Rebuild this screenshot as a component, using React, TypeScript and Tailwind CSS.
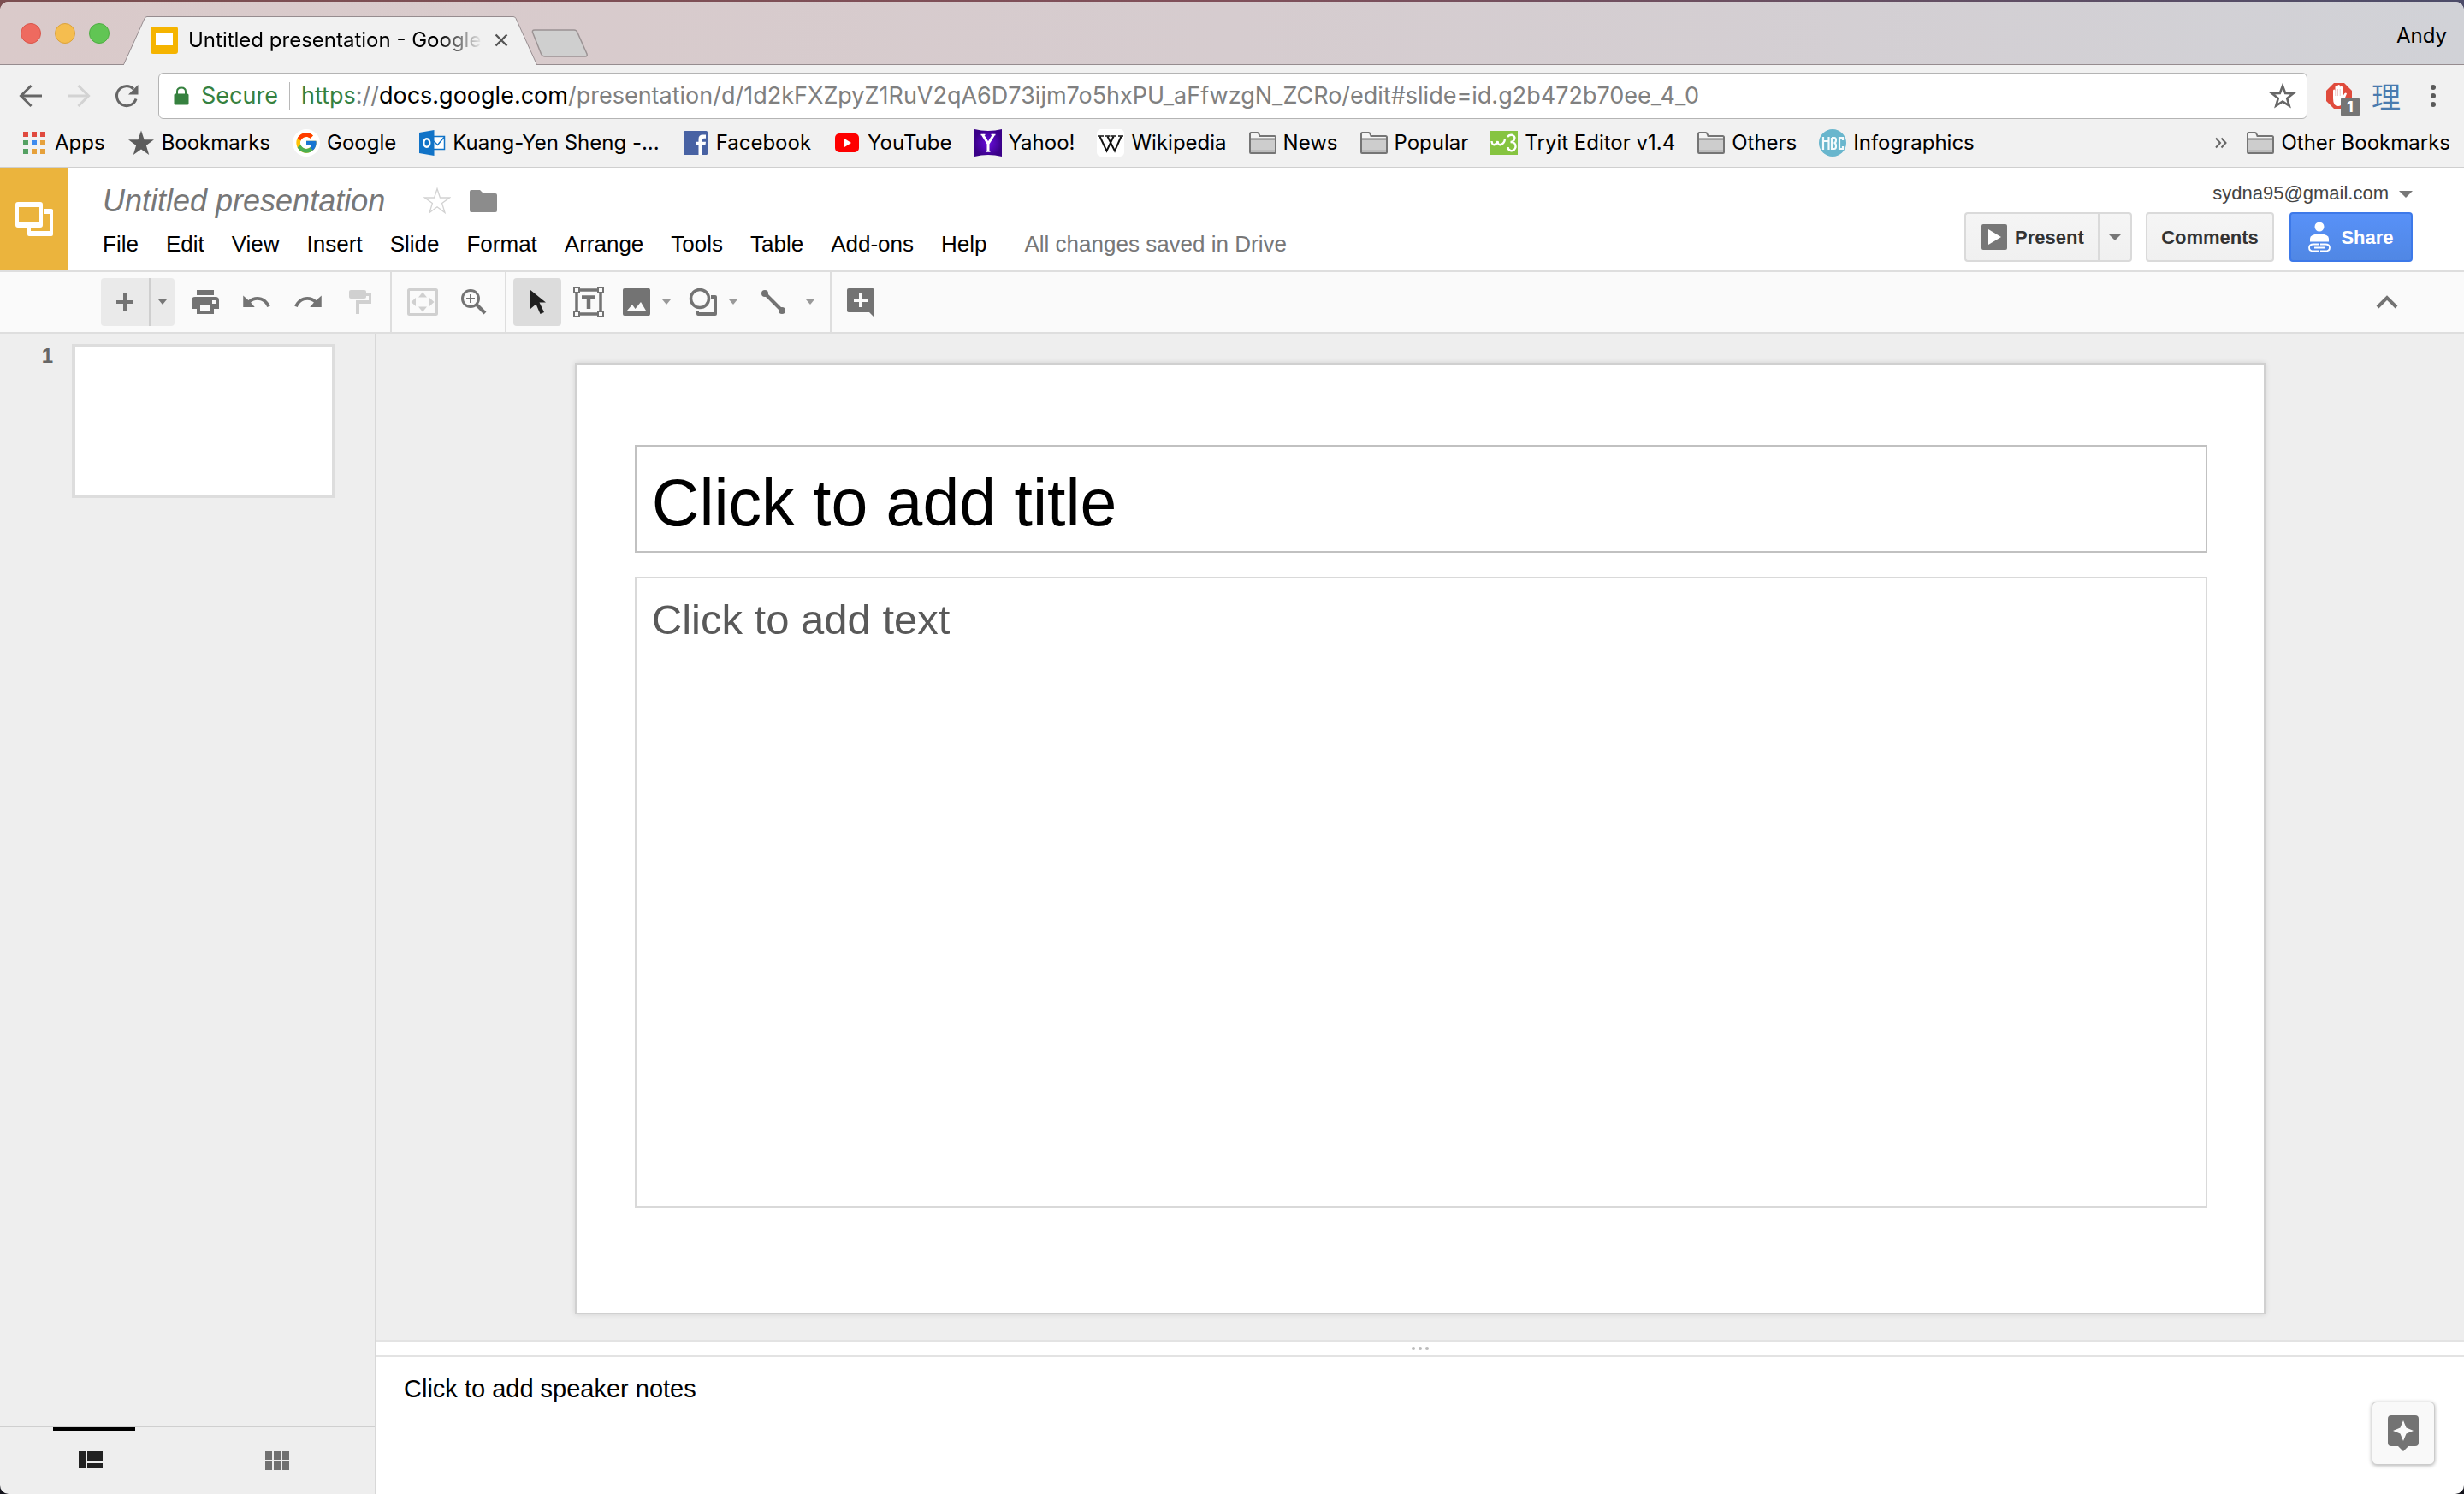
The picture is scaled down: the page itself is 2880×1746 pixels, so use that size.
import type { ReactNode } from "react";
import { FcGoogle } from "react-icons/fc";

const INTER = "font-[Inter,sans-serif]";
const ARIAL = "font-['Liberation_Sans',Arial,sans-serif]";

/* ---------- bookmark icons (32px box) ---------- */

function Ico({ children }: { children: ReactNode }) {
  return (
    <svg viewBox="0 0 32 32" className="size-8 shrink-0" aria-hidden="true">
      {children}
    </svg>
  );
}

const FolderIcon = () => (
  <Ico>
    <path d="M1 27V5.500Q1 4 2.500 4H9.500Q11 4 11.500 5.500L12.500 8H29.500Q31 8 31 9.500V27Q31 28 30 28H2Q1 28 1 27Z" fill="#f4f4f4" stroke="#757575" strokeWidth="2" />
    <path d="M2 12H30V27H2Z" fill="#cdcdcd" />
    <path d="M2 24H30V27H2Z" fill="#bcbcbc" />
    <path d="M1 11.500H31" stroke="#757575" strokeWidth="2" />
  </Ico>
);

const AppsIcon = () => (
  <Ico>
    {["#e04a3f", "#e04a3f", "#e04a3f", "#55a163", "#3f8bee", "#e6a13c", "#55a163", "#e6a13c", "#e6a13c"].map((c, i) => (
      <rect key={i} x={3 + (i % 3) * 10} y={3 + Math.floor(i / 3) * 10} width="6" height="6" fill={c} />
    ))}
  </Ico>
);

const StarIcon = () => (
  <Ico>
    <path d="M16 1.500L19.600 12.200L31 12.300L21.900 19L25.200 30L16 23.400L6.800 30L10.100 19L1 12.300L12.400 12.200Z" fill="#5c5c5c" />
  </Ico>
);

const GoogleIcon = () => (
  <span className="flex size-8 shrink-0 items-center justify-center rounded-full bg-white">
    <FcGoogle className="size-7" />
  </span>
);

const OutlookIcon = () => (
  <Ico>
    <rect x="15" y="8.500" width="15.500" height="15" fill="#fff" stroke="#1173c7" strokeWidth="1.500" />
    <path d="M18 14L22.500 18.500L30 9.500" fill="none" stroke="#1173c7" strokeWidth="1.500" />
    <path d="M1 4L18.500 1V31L1 28Z" fill="#1173c7" />
    <ellipse cx="9.800" cy="16" rx="3.500" ry="4.800" fill="none" stroke="#fff" strokeWidth="2.400" />
  </Ico>
);

const FacebookIcon = () => (
  <Ico>
    <rect x="2" y="2" width="28" height="28" rx="1.500" fill="#4862a3" />
    <path d="M19.500 30V19H16V14.800H19.500V11.500Q19.500 6.500 24.500 6.500H28V10.700H25.800Q24 10.700 24 12.500V14.800H28L27.400 19H24V30Z" fill="#fff" />
  </Ico>
);

const YouTubeIcon = () => (
  <Ico>
    <rect x="2" y="5" width="28" height="22" rx="5" fill="#fe0000" />
    <path d="M13 11L21 16L13 21Z" fill="#fff" />
  </Ico>
);

const YahooIcon = () => (
  <Ico>
    <defs>
      <radialGradient id="yh">
        <stop offset="0" stopColor="#6a0fe0" />
        <stop offset="1" stopColor="#3a0088" />
      </radialGradient>
    </defs>
    <path d="M0 0Q16 4 32 0V32Q16 28 0 32Z" fill="url(#yh)" />
    <path d="M9.500 6.500L16 17V26M22.500 6.500L16 17" fill="none" stroke="#fff" strokeWidth="3" />
    <path d="M7.500 6.500H12.500M19.500 6.500H24.500M13.500 26H18.500" stroke="#fff" strokeWidth="1.500" />
  </Ico>
);

const WikipediaIcon = () => (
  <Ico>
    <rect width="32" height="32" rx="5" fill="#fff" />
    <path d="M3.500 8.500L11.500 25.500L19.500 8.500M12.500 8.500L21 25.500L28.500 8.500" fill="none" stroke="#111" strokeWidth="2" />
    <path d="M1 8H8M10 8H15.500M17 8H22M25 8H31" stroke="#111" strokeWidth="1.300" />
  </Ico>
);

const W3Icon = () => (
  <Ico>
    <rect y="2" width="32" height="28" fill="#86c440" />
    <path d="M1.500 14Q2 19 5 18Q8 17 8.500 14Q9 19 12 18Q16 17 17 12" fill="none" stroke="#fff" strokeWidth="2.400" />
    <path d="M20 9Q22 6 26 7Q30 9 27.500 13Q26 15 23.500 15Q30 15 29.500 21Q28 26 23.500 25Q20.500 24 20.500 21" fill="none" stroke="#fff" strokeWidth="2.400" />
  </Ico>
);

const MbcIcon = () => (
  <Ico>
    <circle cx="16" cy="16" r="16" fill="#69b6cd" />
    <path d="M5 24V9M5 14H11M11.500 9V24M15 10H18Q20 10 20 13Q20 16 17.500 16Q20 16 20 20Q20 23 18 23H15V10M28 13V10H24V23H28V20" fill="none" stroke="#f3fafc" strokeWidth="2.200" />
  </Ico>
);

const BOOKMARKS: { label: string; icon: ReactNode }[] = [
  { label: "Apps", icon: <AppsIcon /> },
  { label: "Bookmarks", icon: <StarIcon /> },
  { label: "Google", icon: <GoogleIcon /> },
  { label: "Kuang-Yen Sheng -...", icon: <OutlookIcon /> },
  { label: "Facebook", icon: <FacebookIcon /> },
  { label: "YouTube", icon: <YouTubeIcon /> },
  { label: "Yahoo!", icon: <YahooIcon /> },
  { label: "Wikipedia", icon: <WikipediaIcon /> },
  { label: "News", icon: <FolderIcon /> },
  { label: "Popular", icon: <FolderIcon /> },
  { label: "Tryit Editor v1.4", icon: <W3Icon /> },
  { label: "Others", icon: <FolderIcon /> },
  { label: "Infographics", icon: <MbcIcon /> },
];

function Bookmark({ label, icon }: { label: string; icon: ReactNode }) {
  return (
    <a href="#" className="flex shrink-0 items-center gap-2 whitespace-nowrap">
      {icon}
      {label}
    </a>
  );
}

/* ---------- browser chrome ---------- */

function TabStrip() {
  return (
    <div className="flex h-[74px] items-end bg-linear-to-r from-[#dacaca] via-[#d6cccf] to-[#d1d2d7] shadow-[inset_0_-1px_0_#968c8f]">
      <div className="flex h-full w-[144px] shrink-0 items-center gap-4 pl-6">
        <button aria-label="Close window" className="size-6 rounded-full border border-[#d9564b] bg-[#ee6a5f]" />
        <button aria-label="Minimize window" className="size-6 rounded-full border border-[#dba23c] bg-[#f5bd4f]" />
        <button aria-label="Zoom window" className="size-6 rounded-full border border-[#4fae43] bg-[#61c554]" />
      </div>
      <div className="relative h-[57px] w-[484px] shrink-0">
        <svg viewBox="0 0 484 57" preserveAspectRatio="none" className="absolute inset-0 size-full" aria-hidden="true">
          <path d="M0 57.500L1 55.500L25 2.500Q26 .5 28 .5H456Q458 .5 459 2.500L483 55.500L484 57.500Z" fill="#f1f1f1" stroke="#968c8f" strokeWidth="1" />
          <path d="M1 57H483" stroke="#f1f1f1" strokeWidth="2" />
        </svg>
        <div className="relative flex h-full items-center pr-[34px] pb-px pl-8">
          <svg viewBox="0 0 32 32" className="size-8 shrink-0" aria-hidden="true">
            <rect width="32" height="32" rx="3" fill="#f5b400" />
            <rect x="6" y="8" width="20" height="14" fill="#fff" />
          </svg>
          <span className="ml-3 w-[344px] overflow-hidden whitespace-nowrap text-2xl text-black mask-r-from-85% mask-r-to-100%">
            Untitled presentation - Google
          </span>
          <button aria-label="Close tab" className="ml-[14px] shrink-0">
            <svg viewBox="0 0 16 16" className="size-4" aria-hidden="true">
              <path d="M1.500 1.500L14.500 14.500M14.500 1.500L1.500 14.500" stroke="#555" strokeWidth="2.400" />
            </svg>
          </button>
        </div>
      </div>
      <button aria-label="New tab" className="-ml-[8px] mb-2 shrink-0">
        <svg viewBox="0 0 68 34" className="h-[34px] w-[68px]" aria-hidden="true">
          <path d="M5 1H51Q54 1 55 4L66 29Q67 32 64 32H17Q14 32 12.500 29L3 5Q1 1 5 1Z" fill="#cfcfcf" stroke="#9b9394" strokeWidth="1.500" />
        </svg>
      </button>
      <button className="mr-5 mb-[18px] ml-auto text-2xl leading-8 text-black">Andy</button>
    </div>
  );
}

function AddressBar() {
  return (
    <div className="flex h-[72px] items-center pr-8 pl-5">
      <div className="flex w-[165px] shrink-0 items-center gap-6">
        <button aria-label="Back">
          <svg viewBox="0 0 32 32" className="size-8" aria-hidden="true">
            <path d="M29 16H5M16.500 4L4.500 16L16.500 28" fill="none" stroke="#666" strokeWidth="3" />
          </svg>
        </button>
        <button aria-label="Forward" disabled>
          <svg viewBox="0 0 32 32" className="size-8" aria-hidden="true">
            <path d="M3 16H27M15.500 4L27.500 16L15.500 28" fill="none" stroke="#d3d3d3" strokeWidth="3" />
          </svg>
        </button>
        <button aria-label="Reload">
          <svg viewBox="0 0 32 32" className="size-8" aria-hidden="true">
            <path d="M27 19.500A11.500 11.500 0 1 1 24 7.800" fill="none" stroke="#666" strokeWidth="3" />
            <path d="M29.500 3V14.500H18Z" fill="#666" />
          </svg>
        </button>
      </div>
      <div className="flex h-[54px] min-w-0 flex-1 items-center rounded-md border border-[#b4b4b4] bg-white pr-3 pl-[17px] text-[27px]">
        <svg viewBox="0 0 18 22" className="h-[22px] w-[18px] shrink-0" aria-hidden="true">
          <path d="M4 10V6Q4 1.500 9 1.500T14 6V10" fill="none" stroke="#36813f" strokeWidth="2" />
          <rect x=".5" y="8.500" width="17" height="13" rx="1.500" fill="#36813f" />
        </svg>
        <span className="ml-[14px] text-[#36813f]">Secure</span>
        <span className="mr-[13px] ml-[13px] h-8 w-px bg-[#b8b8b8]" />
        <div role="textbox" aria-label="Address" tabIndex={0} className="min-w-0 flex-1 overflow-hidden whitespace-nowrap text-[#808080]">
          <span className="text-[#36813f]">https</span>://<span className="text-black">docs.google.com</span>
          /presentation/d/1d2kFXZpyZ1RuV2qA6D73ijm7o5hxPU_aFfwzgN_ZCRo/edit#slide=id.g2b472b70ee_4_0
        </div>
        <button aria-label="Bookmark this page">
          <svg viewBox="0 0 32 32" className="size-8" aria-hidden="true">
            <path d="M16 4.500L19.200 13L28.300 13.300L21.200 18.900L23.700 27.600L16 22.600L8.300 27.600L10.800 18.900L3.700 13.300L12.800 13Z" fill="none" stroke="#666" strokeWidth="2.600" />
          </svg>
        </button>
      </div>
      <button aria-label="Ad blocker, 1 blocked" className="relative ml-[21px] shrink-0">
        <svg viewBox="0 0 32 32" className="size-8" aria-hidden="true">
          <path d="M10 1H22L31 10V22L22 31H10L1 22V10Z" fill="#e04b3c" />
          <path d="M9 19V10Q9 8.500 10.200 8.500T11.500 10V5.500Q11.500 4 13 4T14.300 5.500V4.500Q14.300 3 15.700 3T17 4.500V6Q17 4.500 18.500 4.500T20 6V17L22.500 13Q24 12 25 13.500L20.500 24Q18.500 28 15 28Q9 28 9 19Z" fill="#fff" />
          <path d="M11.700 9V16M14.500 8V16M17.200 8V16" stroke="#e8b5b0" strokeWidth=".7" />
        </svg>
        <span className="absolute -right-2 -bottom-2 flex h-[22px] w-[22px] items-center justify-center rounded-xs bg-[#757575] text-lg leading-none font-bold text-white">1</span>
      </button>
      <button className="ml-[22px] shrink-0 font-['Noto_Sans_CJK_TC',sans-serif] text-[34px] leading-9 text-[#4a7aae]">理</button>
      <button aria-label="Menu" className="ml-[34px] shrink-0">
        <svg viewBox="0 0 8 28" className="h-7 w-2" aria-hidden="true">
          <circle cx="4" cy="4" r="3" fill="#5a5a5a" />
          <circle cx="4" cy="14" r="3" fill="#5a5a5a" />
          <circle cx="4" cy="24" r="3" fill="#5a5a5a" />
        </svg>
      </button>
    </div>
  );
}

function BookmarksBar() {
  return (
    <nav className="flex h-12 items-center border-b border-[#cfcfcf] pr-4 pb-[9px] pl-6 text-2xl text-black">
      <div className="flex min-w-0 flex-1 gap-[26px]">
        {BOOKMARKS.map((b) => (
          <Bookmark key={b.label} {...b} />
        ))}
      </div>
      <button aria-label="More bookmarks" className="mr-[23px]">
        <svg viewBox="0 0 14 14" className="size-[14px]" aria-hidden="true">
          <path d="M1 1.500L6 7L1 12.500M7.500 1.500L12.500 7L7.500 12.500" fill="none" stroke="#666" strokeWidth="2" />
        </svg>
      </button>
      <Bookmark label="Other Bookmarks" icon={<FolderIcon />} />
    </nav>
  );
}

/* ---------- document header ---------- */

const MENUS = ["File", "Edit", "View", "Insert", "Slide", "Format", "Arrange", "Tools", "Table", "Add-ons", "Help"];

const Caret = ({ className }: { className: string }) => (
  <svg viewBox="0 0 16 8" preserveAspectRatio="none" className={className} aria-hidden="true">
    <path d="M0 0H16L8 8Z" fill="currentColor" />
  </svg>
);

const GREY_BUTTON = "h-[58px] border-2 border-[#dadada] bg-linear-to-b from-[#f5f5f5] to-[#f0f0f0] text-[22px] font-bold text-[#333]";

function DocHeader() {
  return (
    <header className="flex h-[122px] border-b-2 border-[#dedede] bg-white">
      <a href="#" aria-label="Slides home" className="flex w-20 shrink-0 items-center justify-center bg-[#ebb43d]">
        <svg viewBox="0 0 44 40" className="h-10 w-11" aria-hidden="true">
          <path d="M3 0H29Q32 0 32 3V27Q32 30 29 30H3Q0 30 0 27V3Q0 0 3 0ZM4 6V24H28V6Z" fill="#fff" fillRule="evenodd" />
          <path d="M33 8H42Q44 8 44 10V38Q44 40 42 40H16Q14 40 14 38V31H18V34H40V14H33Z" fill="#fff" />
        </svg>
      </a>
      <div className="flex min-w-0 flex-1 flex-col pt-[14px] pl-10">
        <div className="flex h-[50px] items-center">
          <input aria-label="Document title" defaultValue="Untitled presentation" className="w-[375px] bg-transparent text-4xl text-[#777] italic" />
          <button aria-label="Star">
            <svg viewBox="0 0 32 32" className="size-8" aria-hidden="true">
              <path d="M16 1.500L19.400 12H30.500L21.600 18.500L25 29.500L16 22.800L7 29.500L10.400 18.500L1.500 12H12.600Z" fill="#fff" stroke="#d2d2d2" strokeWidth="1.300" />
            </svg>
          </button>
          <button aria-label="Move to folder" className="ml-[22px]">
            <svg viewBox="0 0 32 26" className="h-[26px] w-8" aria-hidden="true">
              <path d="M2 0H12L16 4H30Q32 4 32 6V24Q32 26 30 26H2Q0 26 0 24V2Q0 0 2 0Z" fill="#8c8c8c" />
            </svg>
          </button>
        </div>
        <div className="flex h-[50px] items-center gap-8 text-[26px] whitespace-nowrap text-black">
          {MENUS.map((m) => (
            <button key={m}>{m}</button>
          ))}
          <span className="ml-3 text-[#777]">All changes saved in Drive</span>
        </div>
      </div>
      <div className="flex shrink-0 flex-col items-end pt-3 pr-[60px]">
        <button className="flex h-[34px] items-center gap-3 text-[22px] text-[#444]">
          sydna95@gmail.com
          <Caret className="mt-1 h-2 w-4 text-[#777]" />
        </button>
        <div className="mt-[6px] flex">
          <button className={`${GREY_BUTTON} flex w-[156px] items-center gap-[9px] rounded-l border-r-0 pl-[18px]`}>
            <svg viewBox="0 0 30 30" className="size-[30px]" aria-hidden="true">
              <rect width="30" height="30" rx="2" fill="#777" />
              <path d="M8 6L23 15L8 24Z" fill="#fff" />
            </svg>
            Present
          </button>
          <button aria-label="Present options" className={`${GREY_BUTTON} flex w-10 items-center justify-center rounded-r`}>
            <Caret className="h-2 w-4 text-[#777]" />
          </button>
          <button className={`${GREY_BUTTON} ml-4 w-[150px] rounded`}>Comments</button>
          <button className="ml-[18px] flex h-[58px] w-36 items-center justify-center gap-3 rounded border-2 border-[#3d79e9] bg-linear-to-b from-[#5891f8] to-[#5087e4] text-[22px] font-bold text-white">
            <svg viewBox="0 0 26 36" className="h-9 w-[26px]" aria-hidden="true">
              <circle cx="13" cy="6" r="5.500" fill="#fff" />
              <path d="M2 23.500V20Q2 14.500 13 14.500T24 20V23.500Z" fill="#fff" />
              <path d="M12 26.500H6Q1 26.500 1 30.500T6 34.500H12M14 26.500H20Q25 26.500 25 30.500T20 34.500H14M7 30.500H19" fill="none" stroke="#fff" strokeWidth="1.800" />
            </svg>
            Share
          </button>
        </div>
      </div>
    </header>
  );
}

/* ---------- toolbar ---------- */

function Tool({ label, children, className = "w-[60px]", disabled = false }: { label: string; children: ReactNode; className?: string; disabled?: boolean }) {
  return (
    <button aria-label={label} disabled={disabled} className={`flex h-14 shrink-0 items-center justify-center ${className}`}>
      <svg viewBox="0 0 36 36" className="size-9" aria-hidden="true">
        {children}
      </svg>
    </button>
  );
}

const Divider = () => <span className="w-[2px] shrink-0 self-stretch bg-[#dedede]" />;
const SmallCaret = () => <Caret className="ml-1 h-[6px] w-[10px] shrink-0 text-[#999]" />;
const G = "#737373";
const L = "#d0d0d0";

function Toolbar() {
  return (
    <div className="flex h-[72px] items-center border-b-2 border-[#dedede] bg-[#fafafa] pl-[118px]">
      <div className="mr-[6px] flex h-14 overflow-hidden rounded bg-[#eaeaea]">
        <Tool label="New slide" className="w-14">
          <path d="M18 8V28M8 18H28" stroke={G} strokeWidth="4" />
        </Tool>
        <button aria-label="New slide with layout" className="flex w-[30px] items-center justify-center border-l-2 border-[#cfcfcf]">
          <Caret className="h-[6px] w-[10px] text-[#777]" />
        </button>
      </div>
      <Tool label="Print">
        <path d="M8 4H28V10H8ZM6 12H30Q34 12 34 16V26H28V32H8V26H2V16Q2 12 6 12ZM12 22V28H24V22ZM26 16V20H30V16Z" fill={G} fillRule="evenodd" />
      </Tool>
      <Tool label="Undo">
        <path transform="scale(1.5)" d="M12.500 8c-2.650 0-5.050.990-6.900 2.600L1.500 7v9h9l-3.120-3.620c1.390-1.160 3.160-1.880 5.120-1.880 3.540 0 6.550 2.310 7.600 5.500l2.370-.780C21.080 11.030 17.150 8 12.500 8z" fill={G} />
      </Tool>
      <Tool label="Redo">
        <path transform="matrix(-1.5 0 0 1.5 36 0)" d="M12.500 8c-2.650 0-5.050.990-6.900 2.600L1.500 7v9h9l-3.120-3.620c1.390-1.160 3.160-1.880 5.120-1.880 3.540 0 6.550 2.310 7.600 5.500l2.370-.780C21.080 11.030 17.150 8 12.500 8z" fill={G} />
      </Tool>
      <Tool label="Paint format" disabled>
        <path d="M8 4H24Q26 4 26 6V8H32V20H18V32H14V16H29V11H26V12Q26 14 24 14H8Q6 14 6 12V6Q6 4 8 4Z" fill={L} />
      </Tool>
      <span className="w-[6px]" />
      <Divider />
      <span className="w-[6px]" />
      <Tool label="Fit to window" disabled>
        <rect x="1.500" y="3.500" width="33" height="29" rx="1" fill="none" stroke={L} strokeWidth="3" />
        <path d="M18 6.500L23 12.500H13ZM18 29.500L13 23.500H23ZM4.500 18L10 13V23ZM31.500 18L26 23V13Z" fill={L} />
      </Tool>
      <Tool label="Zoom">
        <circle cx="14" cy="14" r="9.500" fill="none" stroke={G} strokeWidth="3" />
        <path d="M14 9V19M9 14H19" stroke={G} strokeWidth="2" />
        <path d="M21 21L31 31" stroke={G} strokeWidth="4" />
      </Tool>
      <span className="w-[6px]" />
      <Divider />
      <Tool label="Select" className="mr-1 ml-2 w-14 rounded bg-[#dcdcdc]">
        <path d="M10 4L28 18.500H20.500L26 30L21.500 32L16.500 20.500L10 26Z" fill="#1f1f1f" />
      </Tool>
      <Tool label="Text box" className="w-14">
        <path d="M4 4H32V32H4Z" fill="none" stroke={G} strokeWidth="3.500" />
        <path d="M1 1H7V7H1ZM29 1H35V7H29ZM1 29H7V35H1ZM29 29H35V35H29Z" fill="#fafafa" stroke={G} strokeWidth="2" />
        <path d="M10 12.500H26M18 12.500V26" stroke={G} strokeWidth="4.500" />
      </Tool>
      <Tool label="Image" className="ml-[2px] w-[52px]">
        <path d="M4 2H32Q34 2 34 4V32Q34 34 32 34H4Q2 34 2 32V4Q2 2 4 2ZM7 28H29L23 18L16.500 26L13 21Z" fill={G} fillRule="evenodd" />
      </Tool>
      <SmallCaret />
      <Tool label="Shape" className="ml-3 w-[52px]">
        <circle cx="14" cy="14" r="10.500" fill="none" stroke={G} strokeWidth="3.500" />
        <path d="M27 10H32Q34 10 34 12V32Q34 34 32 34H12Q10 34 10 32V28H13V30H30V14H27Z" fill={G} />
      </Tool>
      <SmallCaret />
      <Tool label="Line" className="ml-4 w-[52px]">
        <path d="M8 8L28 28" stroke={G} strokeWidth="4" />
        <circle cx="8" cy="8" r="4" fill={G} />
        <circle cx="28" cy="28" r="4" fill={G} />
      </Tool>
      <span className="w-2" />
      <SmallCaret />
      <span className="w-[18px]" />
      <Divider />
      <Tool label="Add comment" className="ml-1 w-[60px]">
        <path d="M4 2H32Q34 2 34 4V36L28 30H4Q2 30 2 28V4Q2 2 4 2ZM16 8V14H10V18H16V24H20V18H26V14H20V8Z" fill={G} fillRule="evenodd" />
      </Tool>
      <button aria-label="Hide menus" className="mr-[77px] ml-auto">
        <svg viewBox="0 0 26 16" className="h-4 w-[26px]" aria-hidden="true">
          <path d="M2 14L13 3L24 14" fill="none" stroke={G} strokeWidth="4" />
        </svg>
      </button>
    </div>
  );
}

/* ---------- workspace ---------- */

function Sidebar() {
  return (
    <aside className="flex w-[440px] shrink-0 flex-col border-r-2 border-[#d8d8d8] bg-[#eee]">
      <div className="flex flex-1 items-start pt-3 pr-[46px]">
        <span className="mr-[22px] w-[62px] text-right text-2xl leading-7 font-bold text-[#666]">1</span>
        <button aria-label="Slide 1" className="h-[180px] flex-1 border-4 border-[#ddd] bg-white" />
      </div>
      <div className="flex h-20 border-t-2 border-[#cfcfcf]">
        <button aria-label="Filmstrip view" className="flex w-[220px] flex-col items-center">
          <span className="h-1 w-24 bg-black" />
          <svg viewBox="0 0 28 20" className="mt-6 mr-2 h-5 w-7" aria-hidden="true">
            <path d="M0 0H8V20H0ZM10 0H28V12H10ZM10 14H28V20H10Z" fill="#222" />
          </svg>
        </button>
        <button aria-label="Grid view" className="flex w-[208px] flex-col items-center">
          <svg viewBox="0 0 28 22" className="mt-7 h-[22px] w-7" aria-hidden="true">
            <path d="M0 0H8V10H0ZM10 0H18V10H10ZM20 0H28V10H20ZM0 12H8V22H0ZM10 12H18V22H10ZM20 12H28V22H20Z" fill="#707070" />
          </svg>
        </button>
      </div>
    </aside>
  );
}

function Workspace() {
  return (
    <main className="flex min-w-0 flex-1 flex-col">
      <section className="flex flex-1 justify-center bg-[#eee] pt-[34px] pb-[30px]">
        <div className="flex w-[81%] flex-col gap-7 border-2 border-[#d0d0d0] bg-white pt-[94px] pr-[66px] pb-[122px] pl-[68px] shadow-[0_0_6px_rgba(0,0,0,0.12)]">
          <input
            aria-label="Slide title"
            placeholder="Click to add title"
            className="h-[126px] w-full border-2 border-[#c1c1c1] px-[18px] pt-2 text-[77px] text-black placeholder:text-black"
          />
          <textarea
            aria-label="Slide body"
            placeholder="Click to add text"
            className="w-full flex-1 resize-none border-2 border-[#d9d9d9] px-[18px] py-5 text-[49px] leading-[56px] text-[#595959] placeholder:text-[#595959]"
          />
        </div>
      </section>
      <div className="flex h-5 items-center justify-center gap-1 border-y-2 border-[#e3e3e3] bg-white">
        <span className="size-1 rounded-full bg-[#bbb]" />
        <span className="size-1 rounded-full bg-[#bbb]" />
        <span className="size-1 rounded-full bg-[#bbb]" />
      </div>
      <section className="flex h-[160px] items-end bg-white pr-[34px] pb-[34px]">
        <textarea
          aria-label="Speaker notes"
          placeholder="Click to add speaker notes"
          className="h-full flex-1 resize-none self-start pt-5 pl-8 text-[29px] leading-[34px] text-black placeholder:text-black"
        />
        <button aria-label="Explore" className="flex size-[74px] items-center justify-center rounded-md border border-[#ccc] bg-[#f9f9f9] shadow-[0_1px_4px_rgba(0,0,0,0.3)]">
          <svg viewBox="0 0 36 42" className="h-[42px] w-9" aria-hidden="true">
            <path d="M4 0H32Q36 0 36 4V32Q36 36 32 36H24L18 42L12 36H4Q0 36 0 32V4Q0 0 4 0Z" fill="#737373" />
            <path d="M18 6L21.500 14.500L30 18L21.500 21.500L18 30L14.500 21.500L6 18L14.500 14.500Z" fill="#f9f9f9" />
          </svg>
        </button>
      </section>
    </main>
  );
}

export default function App() {
  return (
    <div className="flex min-h-screen flex-col bg-linear-to-r from-[#7b4e50] via-[#80505a] to-[#4c4c69] pt-[2px]">
      <div className="flex flex-1 flex-col overflow-hidden rounded-t-[10px] bg-[#f1f1f1]">
        <div className={INTER}>
          <TabStrip />
          <AddressBar />
          <BookmarksBar />
        </div>
        <div className={`${ARIAL} flex flex-1 flex-col bg-[#14141c]`}>
          <div className="flex flex-1 flex-col overflow-hidden rounded-b-[10px]">
            <DocHeader />
            <Toolbar />
            <div className="flex flex-1">
              <Sidebar />
              <Workspace />
            </div>
          </div>
        </div>
      </div>
    </div>
  );
}
